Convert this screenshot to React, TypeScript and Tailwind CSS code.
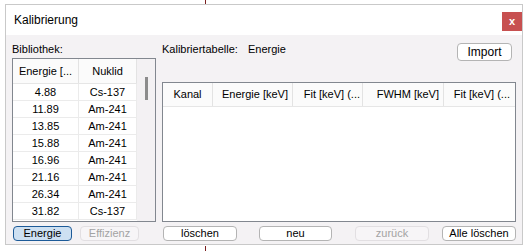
const LIB = [
  ['4.88', 'Cs-137'],
  ['11.89', 'Am-241'],
  ['13.85', 'Am-241'],
  ['15.88', 'Am-241'],
  ['16.96', 'Am-241'],
  ['21.16', 'Am-241'],
  ['26.34', 'Am-241'],
  ['31.82', 'Cs-137'],
] as const;

const COLS = [
  { label: 'Kanal', w: 'w-[50px] justify-center' },
  { label: 'Energie [keV]', w: 'w-[80px] justify-end pr-[4px]' },
  { label: 'Fit [keV] (...', w: 'w-[70px] justify-end pr-[2px]' },
  { label: 'FWHM [keV]', w: 'w-[81px] justify-end pr-[4px]' },
  { label: 'Fit [keV] (...', w: 'flex-1 justify-end pr-[5px]' },
];

function Btn({ label, w, disabled, active }: { label: string; w: string; disabled?: boolean; active?: boolean }) {
  const tone = active
    ? 'border-[#1c5a98] bg-[#cde0f2] text-black'
    : disabled
      ? 'border-[#e2dfe2] bg-[#f7f5f7] text-[#a3a3a3]'
      : 'border-[#b4b4b4] bg-white text-black';
  return (
    <div className={`${w} flex h-[15px] items-center justify-center rounded-[4px] border text-[11px] leading-none ${tone}`}>
      {label}
    </div>
  );
}

export default function App() {
  return (
    <div className="relative h-[251px] w-[528px] overflow-hidden bg-white font-['Liberation_Sans',Arial,sans-serif] text-black">
      <div className="h-[4px]">
        <div className="ml-[205px] h-full w-[1px] bg-[#7a1f1f]" />
      </div>

      <div className="ml-[5px] flex h-[241px] w-[518px] flex-col border border-[#c9c9c9] bg-[#f4f2f4]">
        {/* title bar */}
        <div className="flex h-[30px] shrink-0 items-start justify-between bg-white">
          <span className="ml-[8px] mt-[8px] text-[12px] leading-[14px]">Kalibrierung</span>
          <div className="mt-[7px] flex h-[19px] w-[20px] items-center justify-center bg-[#c75050] text-[11px] font-bold leading-none text-white">
            x
          </div>
        </div>

        <div className="flex flex-1 gap-[6px] px-[6px] pt-[7px] text-[11px]">
          {/* library */}
          <div className="flex w-[144px] flex-col">
            <div className="h-[14px] leading-[14px]">Bibliothek:</div>
            <div className="mt-[2px] flex h-[164px] border border-[#82878f]">
              <div className="flex w-[124px] flex-col bg-white">
                <div className="flex h-[25px] shrink-0 border-b border-[#e6e6e6] bg-[#fbfbfb]">
                  <div className="flex w-[66px] items-center justify-center border-r border-[#e3e3e3]">Energie [...</div>
                  <div className="flex flex-1 items-center justify-center border-r border-[#e3e3e3]">Nuklid</div>
                </div>
                {LIB.map(([e, n]) => (
                  <div key={e} className="flex h-[17px] shrink-0 border-b border-[#ebebeb]">
                    <div className="flex w-[66px] items-center justify-center border-r border-[#ebebeb]">{e}</div>
                    <div className="flex flex-1 items-center justify-center border-r border-[#ebebeb]">{n}</div>
                  </div>
                ))}
              </div>
              <div className="flex flex-1 justify-center bg-[#f3f1f3] pt-[18px]">
                <div className="h-[23px] w-[3px] bg-[#8c8c8c]" />
              </div>
            </div>
            <div className="mt-[4px] flex gap-[8px] pl-[1px]">
              <Btn label="Energie" w="w-[59px]" active />
              <Btn label="Effizienz" w="w-[59px]" disabled />
            </div>
          </div>

          {/* calibration table */}
          <div className="flex w-[354px] flex-col">
            <div className="flex h-[19px] items-start">
              <span className="w-[86px] leading-[14px]">Kalibriertabelle:</span>
              <span className="leading-[14px]">Energie</span>
              <div className="ml-auto mr-[4px] mt-[1px] flex h-[18px] w-[55px] items-center justify-center rounded-[4px] border border-[#b4b4b4] bg-white text-[12px]">
                Import
              </div>
            </div>
            <div className="mt-[21px] flex h-[140px] flex-col border border-[#82878f] bg-white">
              <div className="flex h-[24px] border-b border-[#e6e6e6] bg-[#fbfbfb]">
                {COLS.map((c, i) => (
                  <div key={i} className={`${c.w} flex items-center border-r border-[#e3e3e3] last:border-r-0`}>
                    {c.label}
                  </div>
                ))}
              </div>
            </div>
            <div className="mt-[4px] flex pl-[1px]">
              <Btn label="löschen" w="w-[74px]" />
              <div className="ml-[22px]">
                <Btn label="neu" w="w-[73px]" />
              </div>
              <div className="ml-[23px]">
                <Btn label="zurück" w="w-[74px]" disabled />
              </div>
              <div className="ml-[13px]">
                <Btn label="Alle löschen" w="w-[74px]" />
              </div>
            </div>
          </div>
        </div>
      </div>

      <div className="ml-[205px] mt-[1px] h-[8px] w-[1px] bg-[#7a1f1f]" />
    </div>
  );
}
